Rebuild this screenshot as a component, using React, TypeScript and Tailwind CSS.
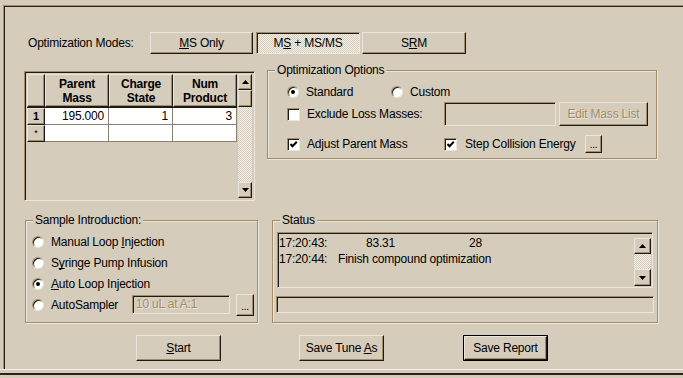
import React from "react";

const raised =
  "border border-t-[#eae6dd] border-l-[#eae6dd] border-r-[#1e1a14] border-b-[#1e1a14] shadow-[inset_-1px_-1px_0_#a28d68]";
const sunken =
  "border border-t-[#a28d68] border-l-[#a28d68] border-r-[#eae6dd] border-b-[#eae6dd] shadow-[inset_1px_1px_0_#1e1a14]";
const groupBox =
  "relative border border-[#a28d68] shadow-[inset_1px_1px_0_#eae6dd,1px_1px_0_#eae6dd]";
const dither =
  "bg-[repeating-conic-gradient(#f3f0ea_0_25%,#d5ccbb_0_50%)] bg-[length:2px_2px]";

function U({ c }: { c: string }) {
  return <span className="underline underline-offset-[1px] [text-decoration-skip-ink:none]">{c}</span>;
}

function Arrow({ up }: { up?: boolean }) {
  return (
    <svg width="7" height="4" viewBox="0 0 7 4">
      {up ? <polygon points="0,4 7,4 3.5,0" fill="#000" /> : <polygon points="0,0 7,0 3.5,4" fill="#000" />}
    </svg>
  );
}

function Radio({ checked }: { checked?: boolean }) {
  return (
    <div className="relative w-[12px] h-[12px] rounded-full border border-t-[#a28d68] border-l-[#a28d68] border-r-[#eae6dd] border-b-[#eae6dd] bg-white shadow-[inset_1px_1px_0_#1e1a14] flex items-center justify-center shrink-0">
      {checked && <div className="w-[4px] h-[4px] rounded-full bg-black" />}
    </div>
  );
}

function Check({ checked }: { checked?: boolean }) {
  return (
    <div className={`w-[13px] h-[13px] bg-white ${sunken} flex items-center justify-center shrink-0`}>
      {checked && (
        <svg width="9" height="9" viewBox="0 0 9 9">
          <path d="M1.5 4 L3.5 6.2 L7.8 1.8" stroke="#000" strokeWidth="2" fill="none" />
        </svg>
      )}
    </div>
  );
}

function GroupLabel({ children }: { children: React.ReactNode }) {
  return (
    <div className="absolute -top-[8px] left-[7px] px-[2px] bg-[#d5ccbb] leading-[14px]">{children}</div>
  );
}

export default function App() {
  return (
    <div className="w-[683px] h-[378px] bg-[#d5ccbb] pt-[5px] text-[12px] tracking-[-0.2px] text-black font-['Liberation_Sans',Arial,sans-serif] overflow-hidden">
      <div className="ml-[3px] h-[364px] border-t border-l border-t-[#a28d68] border-l-[#a28d68] shadow-[inset_1px_1px_0_#2b2218] pl-[1px] pt-[1px]">
        {/* Modes row */}
        <div className="mt-[25px] flex items-center h-[22px]">
          <div className="ml-[23px] w-[122px]">Optimization Modes:</div>
          <div className={`w-[103px] h-[22px] ${raised} flex items-center justify-center`}>
            <span>
              <U c="M" />S Only
            </span>
          </div>
          <div className={`ml-[3px] w-[104px] h-[22px] ${sunken} ${dither} flex items-center justify-center`}>
            <span>
              M<U c="S" /> + MS/MS
            </span>
          </div>
          <div className={`ml-[2px] w-[104px] h-[22px] ${raised} flex items-center justify-center`}>
            <span>
              S<U c="R" />M
            </span>
          </div>
        </div>

        {/* Grid + options */}
        <div className="mt-[9px] flex items-start">
          <div className={`ml-[19px] mt-[8px] w-[231px] h-[130px] ${sunken} p-[2px] flex`}>
            <div className="w-[210px] flex flex-col">
              <div className="flex h-[34px] border-b border-[#1e1a14]">
                <div className={`w-[18px] h-full ${raised}`} />
                {[
                  ["Parent", "Mass"],
                  ["Charge", "State"],
                  ["Num", "Product"],
                ].map(([a, b]) => (
                  <div
                    key={a}
                    className={`w-[64px] h-full ${raised} flex flex-col items-center justify-center font-bold leading-[14px]`}
                  >
                    <span>{a}</span>
                    <span>{b}</span>
                  </div>
                ))}
              </div>
              <div className="flex h-[17px]">
                <div className={`w-[18px] h-full ${raised} flex items-center justify-center font-bold text-[11px]`}>1</div>
                <div className="w-[64px] bg-white border-r border-b border-[#8a8070] text-right pr-[4px] leading-[16px]">195.000</div>
                <div className="w-[64px] bg-white border-r border-b border-[#8a8070] text-right pr-[4px] leading-[16px]">1</div>
                <div className="w-[64px] bg-white border-r border-b border-[#8a8070] text-right pr-[4px] leading-[16px]">3</div>
              </div>
              <div className="flex h-[17px]">
                <div className={`w-[18px] h-full ${raised} flex items-center justify-center text-[9px]`}>*</div>
                <div className="w-[64px] bg-white border-r border-b border-[#8a8070]" />
                <div className="w-[64px] bg-white border-r border-b border-[#8a8070]" />
                <div className="w-[64px] bg-white border-r border-b border-[#8a8070]" />
              </div>
            </div>
            <div className={`ml-[1px] w-[17px] h-full flex flex-col ${dither}`}>
              <div className={`h-[16px] ${raised} bg-[#d5ccbb] flex items-center justify-center`}>
                <Arrow up />
              </div>
              <div className={`h-[17px] ${raised} bg-[#d5ccbb]`} />
              <div className="flex-1" />
              <div className={`h-[16px] ${raised} bg-[#d5ccbb] flex items-center justify-center`}>
                <Arrow />
              </div>
            </div>
          </div>

          <div className={`ml-[12px] mt-[7px] w-[390px] h-[89px] ${groupBox} pl-[19px] pt-[14px]`}>
            <GroupLabel>Optimization Options</GroupLabel>
            <div className="flex items-center h-[14px]">
              <div className="w-[104px] flex items-center">
                <Radio checked />
                <span className="ml-[7px]">Standard</span>
              </div>
              <Radio />
              <span className="ml-[7px]">Custom</span>
            </div>
            <div className="mt-[3px] flex items-center h-[24px]">
              <Check />
              <span className="ml-[7px] w-[137px]">Exclude Loss Masses:</span>
              <div className={`w-[112px] h-[24px] ${sunken}`} />
              <div
                className={`ml-[3px] w-[89px] h-[24px] ${raised} flex items-center justify-center text-[#a28d68] [text-shadow:1px_1px_0_#eae6dd]`}
              >
                Edit Mass List
              </div>
            </div>
            <div className="mt-[9px] flex items-center h-[18px]">
              <Check checked />
              <span className="ml-[7px] w-[137px]">Adjust Parent Mass</span>
              <Check checked />
              <span className="ml-[8px] w-[120px]">Step Collision Energy</span>
              <div className={`w-[17px] h-[18px] ${raised} flex items-end justify-center pb-[3px] text-[10px] leading-[8px]`}>
                ...
              </div>
            </div>
          </div>
        </div>

        {/* Sample / Status */}
        <div className="mt-[19px] flex items-start">
          <div className={`ml-[20px] w-[233px] h-[103px] ${groupBox} pl-[6px] pt-[10px]`}>
            <GroupLabel>Sample Introduction:</GroupLabel>
            <div className="flex items-center h-[21px]">
              <Radio />
              <span className="ml-[7px]">
                Manual Loop <U c="I" />njection
              </span>
            </div>
            <div className="flex items-center h-[21px]">
              <Radio />
              <span className="ml-[7px]">
                S<U c="y" />ringe Pump Infusion
              </span>
            </div>
            <div className="flex items-center h-[21px]">
              <Radio checked />
              <span className="ml-[7px]">
                <U c="A" />uto Loop Injection
              </span>
            </div>
            <div className="flex items-center h-[21px]">
              <Radio />
              <span className="ml-[7px] w-[81px]">AutoSampler</span>
              <div
                className={`w-[98px] h-[19px] ${sunken} pl-[3px] leading-[16px] text-[#a28d68] [text-shadow:1px_1px_0_#eae6dd]`}
              >
                10 uL at A:1
              </div>
              <div className={`ml-[6px] w-[18px] h-[22px] ${raised} flex items-end justify-center pb-[4px] text-[10px] leading-[8px]`}>
                ...
              </div>
            </div>
          </div>

          <div className={`ml-[14px] w-[386px] h-[103px] ${groupBox} pl-[4px] pt-[11px]`}>
            <GroupLabel>Status</GroupLabel>
            <div className={`w-[376px] h-[56px] ${sunken} flex pl-[1px] pt-[2px] pr-[1px]`}>
              <div className="flex-1 leading-[16px]">
                <div className="flex">
                  <span className="w-[87px]">17:20:43:</span>
                  <span className="w-[103px]">83.31</span>
                  <span>28</span>
                </div>
                <div className="flex">
                  <span className="w-[59px]">17:20:44:</span>
                  <span>Finish compound optimization</span>
                </div>
              </div>
              <div className={`mt-[3px] w-[17px] h-[48px] flex flex-col ${dither}`}>
                <div className={`h-[16px] ${raised} bg-[#d5ccbb] flex items-center justify-center`}>
                  <Arrow up />
                </div>
                <div className="flex-1" />
                <div className={`h-[17px] ${raised} bg-[#d5ccbb] flex items-center justify-center`}>
                  <Arrow />
                </div>
              </div>
            </div>
            <div className={`mt-[8px] -ml-[1px] w-[378px] h-[17px] ${sunken}`} />
          </div>
        </div>

        {/* Bottom buttons */}
        <div className="mt-[12px] flex items-center">
          <div className={`ml-[131px] w-[85px] h-[26px] ${raised} flex items-center justify-center`}>
            <span>
              <U c="S" />tart
            </span>
          </div>
          <div className={`ml-[78px] w-[85px] h-[26px] ${raised} flex items-center justify-center`}>
            <span>
              Save Tune <U c="A" />s
            </span>
          </div>
          <div className="ml-[79px] w-[85px] h-[26px] border border-black">
            <div className={`w-full h-full ${raised} flex items-center justify-center`}>Save Report</div>
          </div>
        </div>
      </div>
      <div className="h-px bg-[#f3f0ea]" />
      <div className="h-[3px]" />
      <div className="h-[2px] bg-[#2b2218]" />
    </div>
  );
}
